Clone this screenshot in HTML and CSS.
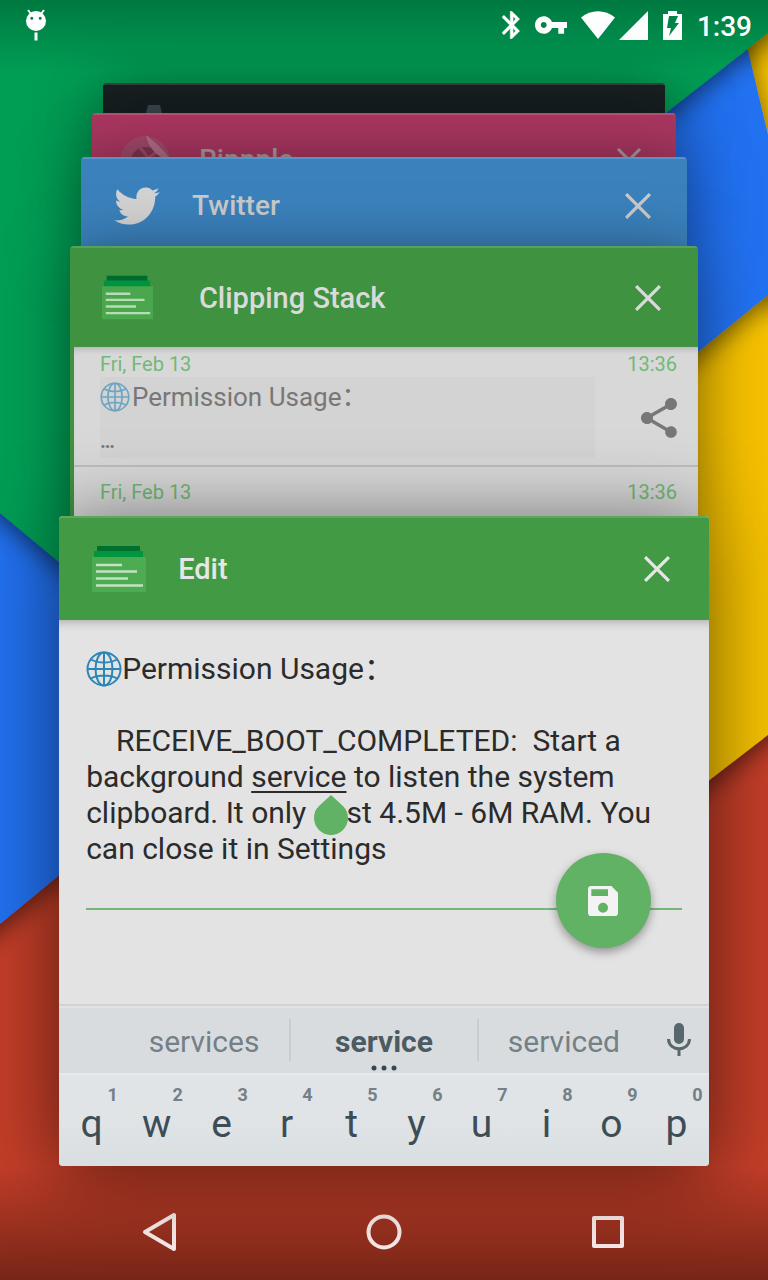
FILE: index.html
```html
<!DOCTYPE html>
<html lang="en">
<head>
<meta charset="utf-8">
<meta name="viewport" content="width=device-width, initial-scale=1">
<title>Recent apps</title>
<link rel="stylesheet" href="styles.css">
</head>
<body>
<svg class="wallpaper" viewBox="0 0 768 1280" preserveAspectRatio="none" aria-hidden="true">
  <defs>
    <filter id="fold" x="-20%" y="-20%" width="140%" height="140%">
      <feDropShadow dx="0" dy="6" stdDeviation="12" flood-color="#000" flood-opacity=".55"/>
    </filter>
  </defs>
  <rect width="768" height="1280" fill="#c43e28"/>
  <path d="M900 -20V633L300 1096V-20Z" fill="#f5c103" filter="url(#fold)"/>
  <path d="M736 0L810 312L768 295L350 636L0 924L-200 1084V0Z" fill="#2371f0" filter="url(#fold)"/>
  <path d="M-100 -100H900V-72L768 33L130 532V621L0 513L-100 430Z" fill="#009e55" filter="url(#fold)"/>
</svg>

<header class="status">
  <svg class="debug" viewBox="0 0 22 32" width="22" height="32" aria-label="Debugging">
    <path d="M3 1L6 5M19 1L16 5" stroke="#fff" stroke-width="2"/>
    <path fill="#fff" fill-rule="evenodd" d="M11 2a10 10 0 1 0 0 20a10 10 0 1 0 0-20ZM6.800 7.800a1.500 1.500 0 1 1 0 3a1.500 1.500 0 1 1 0-3ZM15.200 7.800a1.500 1.500 0 1 1 0 3a1.500 1.500 0 1 1 0-3ZM9.500 23.500h3v8h-3Z"/>
  </svg>
  <div class="status-icons">
    <svg viewBox="5 2 13 20" width="18" height="28" aria-label="Bluetooth"><path stroke="#fff" stroke-width=".4" d="M17.710 7.710L12 2h-1v7.590L6.410 5 5 6.410 10.590 12 5 17.590 6.410 19 11 14.410V22h1l5.710-5.710-4.300-4.290 4.300-4.290zM13 5.830l1.880 1.880L13 9.590V5.830zm1.880 10.460L13 18.170v-3.760l1.880 1.880z"/></svg>
    <svg class="key-icon" viewBox="1 6 22 12" width="32" height="18" aria-label="VPN"><path d="M12.650 10C11.830 7.670 9.610 6 7 6c-3.310 0-6 2.690-6 6s2.690 6 6 6c2.610 0 4.830-1.670 5.650-4H17v4h4v-4h2v-4H12.650zM7 14c-1.100 0-2-.9-2-2s.9-2 2-2 2 .9 2 2-.9 2-2 2z"/></svg>
    <div class="radio">
      <svg viewBox="0 0 34 28" width="34" height="28" aria-label="Wi-Fi"><path d="M0 6.500C10-2 24-2 34 6.500L17 28Z"/></svg>
      <svg viewBox="0 0 29 29" width="29" height="29" aria-label="Signal"><path d="M29 0V29H0Z"/></svg>
    </div>
    <svg viewBox="0 0 19 29" width="19" height="29" aria-label="Battery charging"><path fill-rule="evenodd" d="M5 0h9v3h5v26H0V3h5ZM6 5L4 17h4L6 25L16 12h-4L15 5Z"/></svg>
    <time class="clock">1:39</time>
  </div>
</header>

<main class="stack">
  <section class="card card-settings" aria-label="Settings">
    <div class="bar">
      <svg class="gear" viewBox="0 0 46 46" width="46" height="46" aria-hidden="true"><path fill-rule="evenodd" d="M17 0h12l2 8 7 4 6-4 2 11-6 4v2l6 5-6 10-8-3-5 3-2 6H19l-2-6-6-3-7 3-5-10 6-5v-4L0 17 5 8l5 3 5-3ZM23 15a8 8 0 1 0 0 16a8 8 0 1 0 0-16Z"/></svg>
    </div>
  </section>

  <section class="card card-rippple">
    <div class="bar">
      <svg class="icon" viewBox="0 0 52 52" width="52" height="52" aria-hidden="true">
        <circle cx="25" cy="27" r="25" fill="#a04869"/>
        <circle cx="26" cy="29" r="16" fill="#7d3450"/>
        <path d="M20 14C27 20 32 30 33 44M11 27C22 27 31 24 37 17" fill="none" stroke="#a04869" stroke-width="3"/>
        <path d="M26 1C37 10 46 18 52 28C38 24 28 14 26 1Z" fill="#b06d88"/>
      </svg>
      <h2 class="title">Rippple</h2>
      <button class="close" aria-label="Close Rippple"><svg viewBox="0 0 24 24" width="24" height="24"><path d="M1 1L23 23M23 1L1 23"/></svg></button>
    </div>
  </section>

  <section class="card card-twitter">
    <div class="bar">
      <svg class="icon" viewBox="0 2 24 20" width="46" height="38" aria-hidden="true"><path fill="#d3d3d3" d="M23.953 4.570a10 10 0 01-2.825.775 4.958 4.958 0 002.163-2.723c-.951.555-2.005.959-3.127 1.184a4.920 4.920 0 00-8.384 4.482C7.690 8.095 4.067 6.130 1.640 3.162a4.822 4.822 0 00-.666 2.475c0 1.710.870 3.213 2.188 4.096a4.904 4.904 0 01-2.228-.616v.060a4.923 4.923 0 003.946 4.827 4.996 4.996 0 01-2.212.085 4.936 4.936 0 004.604 3.417 9.867 9.867 0 01-6.102 2.105c-.390 0-.779-.023-1.170-.067a13.995 13.995 0 007.557 2.209c9.053 0 13.998-7.496 13.998-13.985 0-.210 0-.420-.015-.630A9.935 9.935 0 0024 4.590z"/></svg>
      <h2 class="title">Twitter</h2>
      <button class="close" aria-label="Close Twitter"><svg viewBox="0 0 24 24" width="26" height="26"><path d="M1 1L23 23M23 1L1 23"/></svg></button>
    </div>
  </section>

  <section class="card card-clips">
    <div class="bar">
      <svg class="icon" viewBox="0 0 54 46" width="51" height="45" aria-hidden="true">
        <path fill="#006b2e" d="M5 0h43v6H5z"/><path fill="#00943f" d="M2 5h49v7H2z"/><path fill="#4aa74e" d="M0 11h54v35H0z"/>
        <path stroke="#b9dcb8" stroke-width="2.500" d="M4 19H30M4 25.500H45M4 32.500H36M4 39.500H51"/>
      </svg>
      <h2 class="title">Clipping Stack</h2>
      <button class="close" aria-label="Close Clipping Stack"><svg viewBox="0 0 24 24" width="26" height="26"><path d="M1 1L23 23M23 1L1 23"/></svg></button>
    </div>
    <ul class="clips">
      <li class="clip">
        <div class="clip-meta"><span>Fri, Feb 13</span><time>13:36</time></div>
        <div class="clip-row">
          <div class="clip-text"><svg class="globe" viewBox="0 0 36 36" width="30" height="30" aria-label="Globe"><use href="#globe"/></svg>Permission Usage：<span class="more">…</span></div>
          <button class="share" aria-label="Share"><svg viewBox="3 2 18 20" width="36" height="40"><path d="M18 16.080c-.760 0-1.440.3-1.960.770L8.910 12.700c.05-.230.090-.460.090-.7s-.04-.470-.090-.7l7.050-4.110c.540.5 1.250.810 2.040.810 1.660 0 3-1.340 3-3s-1.340-3-3-3-3 1.340-3 3c0 .240.040.470.090.7L8.040 9.810C7.500 9.310 6.790 9 6 9c-1.660 0-3 1.340-3 3s1.340 3 3 3c.790 0 1.500-.310 2.040-.810l7.120 4.160c-.05.210-.080.430-.080.650 0 1.610 1.310 2.920 2.920 2.920s2.920-1.310 2.920-2.920-1.310-2.920-2.920-2.920z"/></svg></button>
        </div>
      </li>
      <li class="clip">
        <div class="clip-meta"><span>Fri, Feb 13</span><time>13:36</time></div>
      </li>
    </ul>
  </section>

  <section class="card card-edit">
    <div class="bar">
      <svg class="icon" viewBox="0 0 54 46" width="54" height="46" aria-hidden="true">
        <path fill="#00702f" d="M5 0h43v6H5z"/><path fill="#009640" d="M2 5h49v7H2z"/><path fill="#4dac51" d="M0 11h54v35H0z"/>
        <path stroke="#c4e3c3" stroke-width="2.500" d="M4 19H30M4 25.500H45M4 32.500H36M4 39.500H51"/>
      </svg>
      <h2 class="title">Edit</h2>
      <button class="close" aria-label="Close Edit"><svg viewBox="0 0 24 24" width="26" height="26"><path d="M1 1L23 23M23 1L1 23"/></svg></button>
    </div>
    <div class="page">
      <div class="editor" role="textbox" aria-multiline="true" aria-label="Clip text" contenteditable="true" spellcheck="false"><svg class="globe" viewBox="0 0 36 36" width="36" height="36" aria-label="Globe"><g id="globe" fill="none" stroke="#2b86b8" stroke-width="2"><circle cx="18" cy="18" r="16.500"/><ellipse cx="18" cy="18" rx="8.500" ry="16.500"/><path d="M18 1.500V34.500M1.500 18H34.500M5 8.500C12 12.500 24 12.500 31 8.500M5 27.500C12 23.500 24 23.500 31 27.500"/></g></svg>Permission Usage：

    RECEIVE_BOOT_COMPLETED:  Start a background <span class="word">service</span> to listen the system clipboard. It only <span class="caret">co<svg class="handle" viewBox="0 0 34 40" width="34" height="40" aria-hidden="true"><path d="M17 0L29 11A17 17 0 1 1 5 11Z"/></svg></span>st 4.5M - 6M RAM. You can close it in Settings</div>
      <button class="fab" aria-label="Save"><svg viewBox="3 3 18 18" width="30" height="30"><path fill-rule="evenodd" d="M5 3H17L21 7V19a2 2 0 0 1-2 2H5a2 2 0 0 1-2-2V5a2 2 0 0 1 2-2ZM5 5V9H15V5ZM12 13a3 3 0 1 0 0 6a3 3 0 1 0 0-6Z"/></svg></button>
    </div>
    <div class="suggestions">
      <button class="word-option">services</button>
      <button class="word-option chosen">service<svg class="dots" viewBox="0 0 26 6" width="26" height="6" aria-hidden="true"><circle cx="3" cy="3" r="2.500"/><circle cx="13" cy="3" r="2.500"/><circle cx="23" cy="3" r="2.500"/></svg></button>
      <button class="word-option">serviced</button>
      <button class="mic" aria-label="Voice input"><svg viewBox="0 0 24 33" width="24" height="33"><rect x="7" y="0" width="10" height="21" rx="5" stroke="none"/><path d="M1.500 16C2 29 22 29 22.500 16M12 26V33" fill="none"/></svg></button>
    </div>
    <div class="keys">
      <button class="key"><sup>1</sup>q</button>
      <button class="key"><sup>2</sup>w</button>
      <button class="key"><sup>3</sup>e</button>
      <button class="key"><sup>4</sup>r</button>
      <button class="key"><sup>5</sup>t</button>
      <button class="key"><sup>6</sup>y</button>
      <button class="key"><sup>7</sup>u</button>
      <button class="key"><sup>8</sup>i</button>
      <button class="key"><sup>9</sup>o</button>
      <button class="key"><sup>0</sup>p</button>
    </div>
  </section>
</main>

<nav class="nav" aria-label="System">
  <button aria-label="Back"><svg viewBox="0 0 40 40" width="40" height="40"><path d="M34 3V37L5 20Z"/></svg></button>
  <button aria-label="Home"><svg viewBox="0 0 40 40" width="40" height="40"><circle cx="20" cy="20" r="15.500"/></svg></button>
  <button aria-label="Recents"><svg viewBox="0 0 40 40" width="40" height="40"><rect x="6" y="6" width="28" height="28"/></svg></button>
</nav>
</body>
</html>
```

FILE: styles.css
```css
* {
  box-sizing: border-box;
}

body {
  margin: 0;
  min-height: 100vh;
  display: flex;
  flex-direction: column;
  overflow-x: hidden;
  background: #c43e28;
  font-family: Roboto, "Noto Sans CJK SC", sans-serif;
}

button {
  margin: 0;
  padding: 0;
  border: 0;
  background: none;
  color: inherit;
  font: inherit;
  display: flex;
  align-items: center;
  justify-content: center;
}

svg {
  display: block;
  flex: none;
}

.wallpaper {
  position: absolute;
  inset: 0;
  width: 100%;
  height: 100%;
  z-index: -1;
}

/* Status bar */
.status {
  height: 83px;
  padding: 0 16px 33px 25px;
  display: flex;
  align-items: center;
  justify-content: space-between;
  background: linear-gradient(rgba(0, 0, 0, 0.24), rgba(0, 0, 0, 0) 72px);
  color: #fff;
}

.status-icons {
  display: flex;
  align-items: center;
  gap: 15px;
}

.status-icons svg {
  fill: #fff;
}

.radio {
  display: flex;
  gap: 4px;
  margin-left: -1px;
}

.clock {
  padding-top: 3px;
  font-size: 28px;
  font-weight: 500;
  line-height: 47px;
}

/* Card stack */
.stack {
  flex: 1;
  display: flex;
  flex-direction: column;
  align-items: center;
}

.card {
  position: relative;
  overflow: hidden;
  border-radius: 4px 4px 0 0;
  box-shadow: 0 12px 64px rgba(0, 0, 0, 0.52);
  color: #d3d3d3;
}

.bar {
  display: flex;
  align-items: center;
  border-top: 2px solid rgba(255, 255, 255, 0.14);
}

.title {
  margin: 0;
  font-size: 28px;
  font-weight: 500;
  line-height: 36px;
}

.close {
  width: 40px;
  height: 40px;
  margin-left: auto;
}

.close svg {
  fill: none;
  stroke: currentColor;
  stroke-width: 3;
}

.card-settings {
  width: 73.2%;
  height: 30px;
  background: #182022;
}

.card-settings .bar {
  height: 88px;
  padding-left: 28px;
}

.gear {
  fill: #3d4b53;
}

.card-rippple {
  width: 76%;
  height: 44px;
  background: #a93660;
  color: #a99a9f;
}

.card-rippple .bar {
  height: 92px;
  padding: 0 27px 0 28px;
  gap: 27px;
}

.card-twitter {
  width: 78.9%;
  height: 89px;
  background: #3b82bd;
  color: #cacaca;
}

.card-twitter .bar {
  height: 96px;
  padding: 0 29px 0 33px;
  gap: 32px;
}

.card-clips {
  width: 81.8%;
  height: 270px;
  background: #3e9240;
  color: #dadada;
}

.card-clips .bar {
  height: 101px;
  padding: 0 30px 0 32px;
  gap: 46px;
}

.card-clips .title,
.card-edit .title {
  font-size: 29px;
}

.card-edit {
  width: 84.6%;
  border-radius: 4px;
  background: #e3e3e3;
  color: #e6e6e6;
  box-shadow: 0 8px 80px rgba(0, 0, 0, 0.56);
}

.card-edit .bar {
  height: 104px;
  padding: 0 32px 0 33px;
  gap: 32px;
  background: #429a45;
}

/* Clip list */
.clips {
  margin: 0 0 0 4px;
  padding: 0;
  list-style: none;
  background: #d8d8d8;
  box-shadow: inset 0 6px 6px -4px rgba(0, 0, 0, 0.18);
}

.clip {
  height: 120px;
  padding: 4px 21px 0 26px;
  border-bottom: 2px solid #bdbdbd;
}

.clip + .clip {
  height: 150px;
  padding-top: 12px;
}

.clip-meta {
  display: flex;
  justify-content: space-between;
  color: #72b876;
  font-size: 20px;
  line-height: 26px;
}

.clip-row {
  display: flex;
  align-items: center;
  justify-content: space-between;
}

.clip-text {
  width: 495px;
  height: 81px;
  padding-top: 4px;
  background: #d3d3d3;
  color: #777;
  font-size: 26px;
  line-height: 32px;
  overflow: hidden;
}

.clip-text .more {
  display: block;
  padding-top: 12px;
  font-weight: 700;
  font-size: 20px;
}

.clip-text .globe {
  margin-right: 2px;
  opacity: 0.6;
}

.globe {
  display: inline-block;
  vertical-align: middle;
  margin-top: -4px;
}

.share svg {
  fill: #777;
}

/* Editor */
.page {
  position: relative;
  padding: 31px 27px 94px;
  box-shadow: inset 0 10px 10px -8px rgba(0, 0, 0, 0.25);
}

.editor {
  height: 259px;
  border-bottom: 2px solid #74b878;
  outline: none;
  color: #2b2b2b;
  font-size: 30px;
  line-height: 36px;
  white-space: pre-wrap;
}

.word {
  text-decoration: underline;
  text-decoration-thickness: 2px;
  text-underline-offset: 4px;
}

.caret {
  position: relative;
}

.handle {
  position: absolute;
  left: 0;
  top: 0;
  fill: #62b266;
}

.fab {
  position: absolute;
  right: 58px;
  bottom: 56px;
  width: 95px;
  height: 95px;
  border-radius: 50%;
  background: #62b266;
  box-shadow: 0 4px 10px rgba(0, 0, 0, 0.35);
}

.fab svg {
  fill: #f3f3f3;
}

/* Keyboard */
.suggestions {
  height: 69px;
  display: grid;
  grid-template-columns: 60px 17fr 19fr 17fr 60px;
  align-items: center;
  border-top: 2px solid #d0d2d3;
  background: #d8dcdf;
  box-shadow: inset 0 2px #e0e3e5;
  color: #748086;
  font-size: 30px;
  line-height: 36px;
}

.word-option {
  position: relative;
  height: 42px;
  padding-top: 4px;
}

.word-option:first-child {
  grid-column: 2;
}

.chosen {
  border: solid #c9cdd0;
  border-width: 0 2px;
  color: #4c5a62;
  font-weight: 700;
}

.dots {
  position: absolute;
  bottom: -10px;
  left: 50%;
  margin-left: -13px;
  fill: #37474f;
}

.mic svg {
  fill: #58666d;
  stroke: #58666d;
  stroke-width: 3;
}

.keys {
  height: 93px;
  display: grid;
  grid-template-columns: repeat(10, 1fr);
  border-top: 2px solid #e6eaec;
  background: linear-gradient(#e0e4e7 50%, #d9dee0);
  color: #3d4d56;
}

.key {
  flex-direction: column;
  justify-content: flex-start;
  padding-top: 9px;
  font-size: 39px;
  line-height: 36px;
}

.key sup {
  margin-left: 42px;
  color: #748086;
  font-size: 18px;
  font-weight: 700;
  line-height: 22px;
}

/* Navigation bar */
.nav {
  height: 114px;
  padding-top: 18px;
  display: flex;
  align-items: center;
  justify-content: center;
  gap: 184px;
  background: linear-gradient(rgba(0, 0, 0, 0), rgba(0, 0, 0, 0.4));
}

.nav svg {
  fill: none;
  stroke: #f7e9e7;
  stroke-width: 4;
  stroke-linejoin: round;
}
```
